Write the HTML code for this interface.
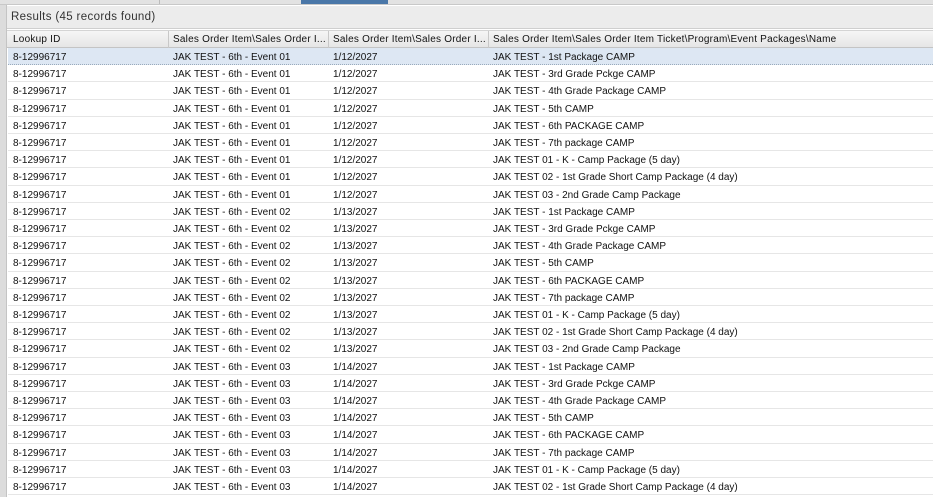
<!DOCTYPE html>
<html><head><style>
*{margin:0;padding:0;box-sizing:border-box}
body{width:933px;height:497px;overflow:hidden;background:#fff;font-family:"Liberation Sans",sans-serif;font-size:10px;color:#111;position:relative}
.tabs{position:absolute;left:0;top:0;width:933px;height:5px;background:#e2e2e2;border-bottom:1px solid #c8c8c8}
.tabs .b{position:absolute;left:301px;top:0;width:87px;height:4px;background:#4a77a8}
.tabs .s1{position:absolute;left:159px;top:0;width:1px;height:4px;background:#bbb}
.left{position:absolute;left:0;top:5px;width:7px;height:492px;background:#dcdcdc;border-right:1px solid #c4c4c4}
.res{position:absolute;left:7px;top:6px;width:926px;height:23px;background:#ececec;border-bottom:1px solid #cfcfcf;font-size:11.5px;letter-spacing:0.35px;color:#333;padding:5px 0 0 4px}
.hdr{position:absolute;left:7px;top:30px;width:926px;height:18px;background:linear-gradient(#f6f6f6,#e6e6e6);border-bottom:1px solid #c4c4c4;border-top:1px solid #d4d4d4}
.hdr .c{letter-spacing:0.22px}
.c{position:absolute;white-space:nowrap;top:3px}
.hdr .sep{position:absolute;top:0;width:1px;height:17px;background:#c8c8c8}
.row{position:absolute;left:8px;width:925px;height:17.2px;border-bottom:1px solid #e6e6e6}
.row .c{top:4px}
.sel{background:#dde7f3;border-bottom:1px dotted #9ab}
</style></head><body>
<div class="tabs"><div class="s1"></div><div class="b"></div></div>
<div class="left"></div>
<div class="res">Results (45 records found)</div>
<div class="hdr">
<div class="c" style="left:6px">Lookup ID</div>
<div class="sep" style="left:161px"></div>
<div class="c" style="left:166px">Sales Order Item\Sales Order I...</div>
<div class="sep" style="left:321px"></div>
<div class="c" style="left:326px">Sales Order Item\Sales Order I...</div>
<div class="sep" style="left:481px"></div>
<div class="c" style="left:486px">Sales Order Item\Sales Order Item Ticket\Program\Event Packages\Name</div>
</div>
<div id="rows"></div>
<script>
var ev=["01","01","01","01","01","01","01","01","01","02","02","02","02","02","02","02","02","02","03","03","03","03","03","03","03","03"];
var dt={"01":"1/12/2027","02":"1/13/2027","03":"1/14/2027"};
var nm=["JAK TEST - 1st Package CAMP","JAK TEST - 3rd Grade Pckge CAMP","JAK TEST - 4th Grade Package CAMP","JAK TEST - 5th CAMP","JAK TEST - 6th PACKAGE CAMP","JAK TEST - 7th package CAMP","JAK TEST 01 - K - Camp Package (5 day)","JAK TEST 02 - 1st Grade Short Camp Package (4 day)","JAK TEST 03 - 2nd Grade Camp Package"];
var h="";
for(var i=0;i<26;i++){var e=ev[i];
h+='<div class="row'+(i==0?' sel':'')+'" style="top:'+(48+i*17.2)+'px"><div class="c" style="left:5px">8-12996717</div><div class="c" style="left:165px">JAK TEST - 6th - Event '+e+'</div><div class="c" style="left:325px">'+dt[e]+'</div><div class="c" style="left:485px">'+nm[i%9]+'</div></div>';}
document.getElementById("rows").innerHTML=h;
</script>
</body></html>
